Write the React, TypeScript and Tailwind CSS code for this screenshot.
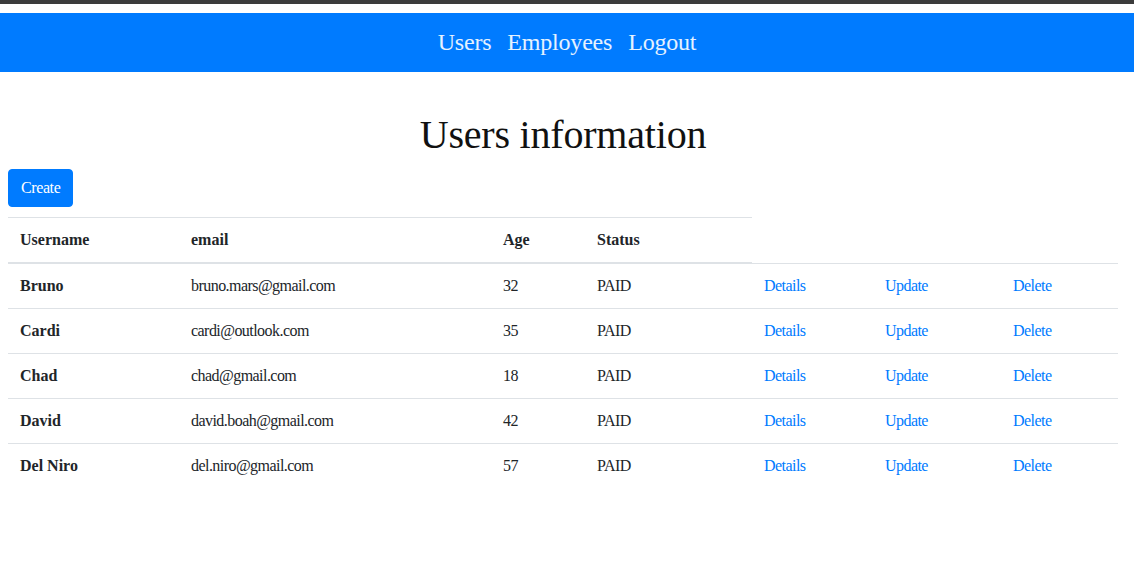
import React from "react";

const users = [
  { name: "Bruno", email: "bruno.mars@gmail.com", age: 32, status: "PAID" },
  { name: "Cardi", email: "cardi@outlook.com", age: 35, status: "PAID" },
  { name: "Chad", email: "chad@gmail.com", age: 18, status: "PAID" },
  { name: "David", email: "david.boah@gmail.com", age: 42, status: "PAID" },
  { name: "Del Niro", email: "del.niro@gmail.com", age: 57, status: "PAID" },
];

const td = "px-3 py-[10px] leading-6 border-t border-[#dee2e6] tracking-[-0.55px]";

export default function App() {
  return (
    <div
      className="min-h-[562px] bg-white text-[#212529] text-base"
      style={{ fontFamily: '"Liberation Serif", "Times New Roman", serif' }}
    >
      <div className="h-[4px] bg-[#3b3b3b]" />
      <div className="h-[9px] bg-white" />
      <nav className="h-[59px] bg-[#007bff] flex items-center justify-center gap-4 pb-[2px]">
        <a className="text-[24px] leading-9 text-white/90 tracking-[-0.2px]">Users</a>
        <a className="text-[24px] leading-9 text-white/90 tracking-[-0.2px]">Employees</a>
        <a className="text-[24px] leading-9 text-white/90 tracking-[-0.2px]">Logout</a>
      </nav>
      <div className="pl-2">
        <h1 className="w-[1110px] text-center text-[40px] leading-[48px] font-normal text-[#111] mt-[39px] mb-[10px] tracking-[-0.2px]">
          Users information
        </h1>
        <button className="bg-[#007bff] text-white rounded-[4px] px-3 py-[6px] leading-6 border border-[#007bff] text-base tracking-[-0.4px]">
          Create
        </button>
        <table className="mt-[10px] w-[1110px] table-fixed border-collapse">
          <colgroup>
            <col className="w-[171px]" />
            <col className="w-[312px]" />
            <col className="w-[94px]" />
            <col className="w-[167px]" />
            <col className="w-[121px]" />
            <col className="w-[128px]" />
            <col className="w-[117px]" />
          </colgroup>
          <thead>
            <tr>
              {["Username", "email", "Age", "Status"].map((h) => (
                <th
                  key={h}
                  className="text-left font-bold px-3 py-[10px] leading-6 border-t border-b-2 border-[#dee2e6]"
                >
                  {h}
                </th>
              ))}
            </tr>
          </thead>
          <tbody>
            {users.map((u) => (
              <tr key={u.name}>
                <td className="px-3 py-[10px] leading-6 border-t border-[#dee2e6] font-bold">{u.name}</td>
                <td className={td}>{u.email}</td>
                <td className={td}>{u.age}</td>
                <td className={td}>{u.status}</td>
                <td className={`${td} text-[#007bff]`}>Details</td>
                <td className={`${td} text-[#007bff]`}>Update</td>
                <td className={`${td} text-[#007bff]`}>Delete</td>
              </tr>
            ))}
          </tbody>
        </table>
      </div>
    </div>
  );
}
